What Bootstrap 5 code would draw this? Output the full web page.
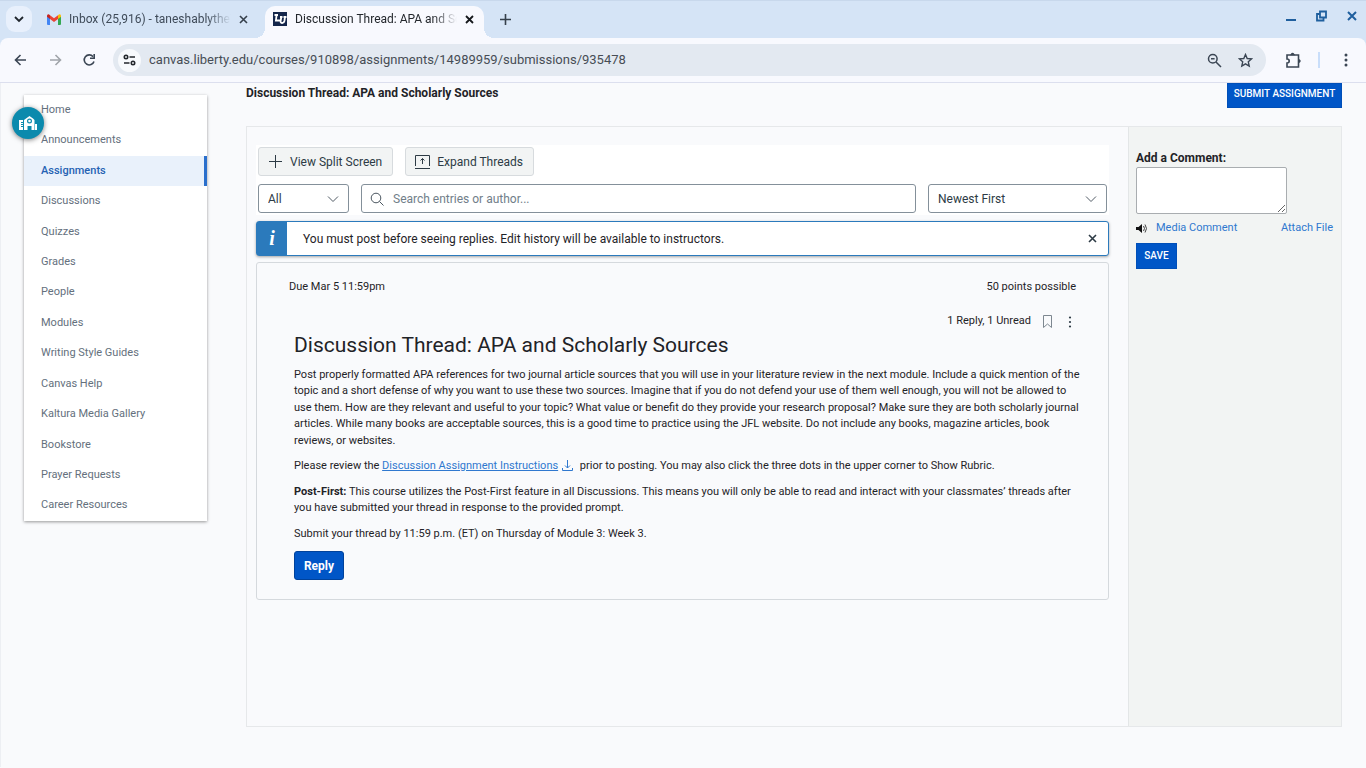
<!DOCTYPE html>
<html lang="en">
<head>
<meta charset="utf-8">
<meta name="viewport" content="width=device-width, initial-scale=1">
<title>Discussion Thread: APA and Scholarly Sources</title>
<link href="https://cdn.jsdelivr.net/npm/bootstrap@5.3.0/dist/css/bootstrap.min.css" rel="stylesheet">
<style>
  body { font-family: Roboto, "Liberation Sans", sans-serif; font-size: 11px; line-height: 1.5; color: #1f2327; background: #f9fafc; }
  button, input, select, textarea { font-family: inherit; }
  a { color: #2f78cf; }
  svg { display: block; flex: none; }
  .icon-btn { border: 0; background: none; padding: 0; color: inherit; display: flex; align-items: center; justify-content: center; flex: none; }

  .tab-strip { background: #d5e4f6; height: 38px; border-top: 1px solid #c8d8ec; }
  .tab-search { width: 26px; height: 26px; border-radius: 9px; background: #e8f0fc; margin: 5px 0 0 6px; }
  .browser-tab { height: 32px; margin-top: 5px; padding-bottom: 6px; font-size: 12px; }
  .tab-first { width: 216px; padding-left: 15px; color: #3f4b59; }
  .tab-current { position: relative; width: 219px; padding-left: 8px; padding-right: 10px; margin-left: 17px; background: #f8f9fe; border-radius: 10px 10px 0 0; color: #23272c; }
  .tab-current::before, .tab-current::after { content: ""; position: absolute; bottom: 0; width: 10px; height: 10px; }
  .tab-current::before { left: -10px; background: radial-gradient(circle at 0 0, transparent 10px, #f8f9fe 10px); }
  .tab-current::after { right: -10px; background: radial-gradient(circle at 100% 0, transparent 10px, #f8f9fe 10px); }
  .tab-title { white-space: nowrap; overflow: hidden; flex: 1; min-width: 0; -webkit-mask-image: linear-gradient(90deg, #000 85%, transparent); mask-image: linear-gradient(90deg, #000 85%, transparent); }
  .window-buttons { gap: 17px; padding-right: 8px; color: #1f5f9e; height: 30px; }

  .toolbar-wrap { background: #d5e4f6; }
  .toolbar { background: #f8f9fe; height: 45px; border-bottom: 1px solid #dcdfee; border-radius: 8px 8px 0 0; padding: 0 18px 0 12px; color: #3b4654; }
  .address { background: #e3e9f1; height: 32px; border-radius: 16px; padding: 0 13px 0 5px; margin: 0 19px 0 16px; }
  .site-info { width: 23px; height: 23px; border-radius: 50%; background: #f8fafd; color: #23272c; }
  .address input { border: 0; background: none; padding: 0; font-size: 13px; color: #474d55; outline: 0; }

  .page-body { padding: 0 24px 40px; gap: 39px; border-left: 1px solid #edeff3; }
  .side-column { width: 183px; margin-left: -1px; padding-top: 12px; position: relative; }
  .course-nav { min-height: 426px; background: #fff; box-shadow: 0 1px 3px rgba(0,0,0,.4); }
  .course-nav a { flex: 1; padding: 0 17px; color: #64707d; text-decoration: none; display: flex; align-items: center; }
  .course-nav a.current { background: #e9f1fb; color: #2562b3; font-weight: 500; border-right: 3px solid #2a6fcc; }
  .campus-badge { position: absolute; left: -12px; top: 24px; width: 32px; height: 32px; border-radius: 50%; background: #0b8aad; color: #fff; box-shadow: 0 1px 5px rgba(0,0,0,.5); }

  .page-title { font-size: 12px; font-weight: 700; line-height: 20px; margin: 0; }
  .solid-btn { background: #0056c7; color: #fff; border: 1px solid #004fb8; font-weight: 500; font-size: 10px; line-height: 16px; padding: 0; border-radius: 0; }
  .submit-btn { width: 115px; height: 25px; padding-bottom: 3px; }
  .save-btn { width: 41px; height: 26px; margin-top: 6px; }
  .work-area { min-height: 601px; margin-top: 18px; border: 1px solid #e6e8ea; }
  .thread-pane { padding: 18px 19px 20px 9px; }
  .comment-pane { width: 213px; background: #f2f4f3; border-left: 1px solid #e3e6e7; padding: 22px 8px 0 7px; }

  .filter-area { background: #fff; padding: 2px; }
  .filter-row { gap: 12px; }
  .soft-btn { height: 29px; border: 1px solid #d7dbde; border-radius: 3px; background: #f2f4f4; font-size: 12px; color: #2d3b45; padding: 0 10px 0 9px; gap: 7px; display: flex; align-items: center; }
  .field-box { height: 29px; border: 1px solid #84909a; border-radius: 3px; background: #fff; font-size: 12px; }
  select.field-box { padding: 0 9px; color: #2d3b45; appearance: none; background: #fff url("data:image/svg+xml,%3Csvg xmlns='http://www.w3.org/2000/svg' width='12' height='8' fill='none' stroke='%23505b64'%3E%3Cpath d='M1 1.5l5 5 5-5'/%3E%3C/svg%3E") no-repeat right 9px center; }
  .filter-kind { width: 91px; }
  .filter-sort { width: 179px; }
  .field-box input { border: 0; outline: 0; background: none; padding: 0; color: #2d3b45; }
  .field-box input::placeholder { color: #717e89; opacity: 1; }
  .notice { margin-top: 6px; height: 35px; border: 1px solid #2b7abc; border-radius: 3px; background: #fff; font-size: 12px; box-shadow: 0 1px 3px rgba(0,0,0,.35); }
  .notice-mark { width: 30px; background: #2b7abc; color: #fff; font: italic 700 20px "Liberation Serif", serif; }
  .thread-card { margin-top: 6px; min-height: 338px; border: 1px solid #d5d9dd; border-radius: 3px; padding: 16px 24px 18px 32px; }
  .entry { padding-left: 5px; }
  .entry-status { height: 20px; margin-top: 16px; gap: 12px; }
  .entry h2 { font-size: 21px; font-weight: 400; line-height: 26px; margin: 0 0 9px; }
  .entry p { margin: 0 0 9px; }
  .reply-btn { width: 50px; height: 29px; border-radius: 3px; font-size: 12px; font-weight: 700; border-color: #00429b; }
  .comment-label { display: block; height: 18px; font-size: 12px; font-weight: 700; }
  .comment-box { display: block; width: 151px; height: 47px; border: 1px solid #a9adb0; border-radius: 2px; background: #fff; }
  .comment-links { margin-top: 6px; }
  .comment-pane a { text-decoration: none; }
</style>
</head>
<body>
<header>
  <div class="tab-strip d-flex">
    <button class="icon-btn tab-search" aria-label="Search tabs"><svg width="10" height="8" fill="none" stroke="#20262d" stroke-width="1.800"><path d="M1 2l4 4 4-4"/></svg></button>
    <div class="browser-tab tab-first d-flex align-items-center">
      <svg width="14" height="11" viewBox="0 0 14 11" class="me-2"><path d="M0 2v8q0 1 1 1h2V4z" fill="#4285f4"/><path d="M14 2v8q0 1-1 1h-2V4z" fill="#34a853"/><path d="M11 1.200V5l3-2.200V1.500Q13-.8 11 1.200z" fill="#fbbc04"/><path d="M0 1.500V2.800L3 5V1.200Q1-.8 0 1.500z" fill="#c5221f"/><path d="M3 1.200V5l4 3 4-3V1.200L7 4.200z" fill="#ea4335"/></svg>
      <span class="tab-title">Inbox (25,916) - taneshablythe7</span>
      <button class="icon-btn ms-2" aria-label="Close tab"><svg width="9" height="9" stroke="#36404b" stroke-width="1.600"><path d="M1 1l7 7M8 1L1 8"/></svg></button>
    </div>
    <div class="browser-tab tab-current d-flex align-items-center">
      <svg width="14" height="14" viewBox="0 0 14 14" class="me-2"><path fill="#14264b" d="M0 0h14v14H0z"/><path fill="none" stroke="#fff" stroke-width="1.800" d="M1.500 3h3.500M3.600 3L2.900 8.500h4M7 5h2.500M8.300 5l-.7 4q-.2 2 1.600 2t2.200-2l.6-4M10.500 5h3"/></svg>
      <span class="tab-title">Discussion Thread: APA and Scholarly</span>
      <button class="icon-btn ms-2" aria-label="Close tab"><svg width="9" height="9" stroke="#16191c" stroke-width="1.800"><path d="M1 1l7 7M8 1L1 8"/></svg></button>
    </div>
    <button class="icon-btn ms-3" aria-label="New tab"><svg width="11" height="11" stroke="#36404b" stroke-width="1.600"><path d="M5.500 0v11M0 5.500h11"/></svg></button>
    <div class="window-buttons d-flex align-items-center ms-auto">
      <button class="icon-btn" aria-label="Minimize"><svg width="14" height="14" stroke="currentColor" stroke-width="2"><path d="M2 11h10"/></svg></button>
      <button class="icon-btn" aria-label="Restore"><svg width="14" height="12" fill="none" stroke="currentColor" stroke-width="1.800"><path d="M5 1.500h6v6H5zM5 4H2v6.500h6.500V8"/></svg></button>
      <button class="icon-btn" aria-label="Close"><svg width="12" height="12" stroke="currentColor" stroke-width="2"><path d="M2 2l8 8M10 2l-8 8"/></svg></button>
    </div>
  </div>
  <div class="toolbar-wrap">
    <div class="toolbar d-flex align-items-center">
      <button class="icon-btn" aria-label="Back"><svg width="17" height="14" fill="none" stroke="currentColor" stroke-width="1.600"><path d="M14 7H4M8.500 2l-5 5 5 5"/></svg></button>
      <button class="icon-btn ms-3" aria-label="Forward"><svg width="20" height="14" fill="none" stroke="#a0a4aa" stroke-width="1.600"><path d="M5 7h10M10.500 2l5 5-5 5"/></svg></button>
      <button class="icon-btn ms-3" aria-label="Reload"><svg width="16" height="14" fill="none" stroke="currentColor" stroke-width="1.600"><path d="M13 8.500A5 5 0 1 1 12 3.600"/><path d="M13.200 1v4.200H9"/></svg></button>
      <div class="address d-flex align-items-center flex-fill">
        <button class="icon-btn site-info" aria-label="Site information"><svg width="13" height="12" fill="none" stroke="currentColor" stroke-width="1.600"><circle cx="3" cy="3" r="1.700"/><path d="M6.500 3H12M1 9h5.500"/><circle cx="10" cy="9" r="1.700"/></svg></button>
        <input class="flex-fill ms-2" aria-label="Address" value="canvas.liberty.edu/courses/910898/assignments/14989959/submissions/935478">
        <button class="icon-btn" aria-label="Zoom"><svg width="15" height="15" fill="none" stroke="currentColor" stroke-width="1.500"><circle cx="5.800" cy="5.800" r="4.300"/><path d="M9 9l5 5M4 5.800h3.600"/></svg></button>
        <button class="icon-btn ms-3" aria-label="Bookmark this page"><svg width="15" height="15" viewBox="0 0 15 15" fill="none" stroke="currentColor" stroke-width="1.400"><path d="M7.500 1.500l1.700 4 4.300.4-3.200 2.900.9 4.300-3.700-2.300-3.700 2.300.9-4.300L1.500 5.900l4.300-.4z"/></svg></button>
      </div>
      <button class="icon-btn" aria-label="Extensions"><svg width="17" height="17" fill="none" stroke="currentColor" stroke-width="1.600"><path d="M2 3h11.500v12H2v-4q2.200 0 2.200-2T2 7z"/><path fill="currentColor" d="M6.500 2.500q1-1.800 2.200 0zM14 8q1.800 1 0 2.200z"/></svg></button>
      <svg width="2" height="16" class="ms-3"><path fill="#c9defa" d="M0 0h2v16H0z"/></svg>
      <button class="icon-btn ms-4" aria-label="Menu"><svg width="4" height="14" fill="currentColor"><circle cx="2" cy="2" r="1.500"/><circle cx="2" cy="7" r="1.500"/><circle cx="2" cy="12" r="1.500"/></svg></button>
    </div>
  </div>
</header>

<div class="page-body d-flex">
  <div class="side-column flex-shrink-0">
    <nav class="course-nav d-flex flex-column" aria-label="Course">
      <a href="#">Home</a><a href="#">Announcements</a><a href="#" class="current">Assignments</a><a href="#">Discussions</a><a href="#">Quizzes</a><a href="#">Grades</a><a href="#">People</a><a href="#">Modules</a><a href="#">Writing Style Guides</a><a href="#">Canvas Help</a><a href="#">Kaltura Media Gallery</a><a href="#">Bookstore</a><a href="#">Prayer Requests</a><a href="#">Career Resources</a>
    </nav>
    <button class="icon-btn campus-badge" aria-label="Campus"><svg width="18" height="16" viewBox="0 0 18 16" fill="currentColor"><path fill-rule="evenodd" d="M0 5h4v2H2v1h2v1H2v1h2v1H2v1h2v3H0zM5 15V5l2-1.500L10.500 1 14 3.500 15.500 5v10h-3v-4h-4v4zM10.500 3.500a2.500 2.500 0 1 0 0 5 2.500 2.500 0 1 0 0-5zM16 9h2v6h-2z"/><circle cx="10.500" cy="6" r="1.300"/></svg></button>
  </div>

  <main class="flex-fill">
    <div class="d-flex justify-content-between align-items-start">
      <h1 class="page-title">Discussion Thread: APA and Scholarly Sources</h1>
      <button class="solid-btn submit-btn">SUBMIT ASSIGNMENT</button>
    </div>
    <div class="work-area d-flex">
      <section class="thread-pane flex-fill">
        <div class="filter-area">
          <div class="filter-row d-flex">
            <button class="soft-btn"><svg width="15" height="13" stroke="currentColor"><path d="M7.500 0v13M1 6.500h13"/></svg>View Split Screen</button>
            <button class="soft-btn"><svg width="15" height="14" fill="none" stroke="currentColor"><path d="M.5 11V.5h14V11M0 13.500h15M7.500 9V3.500M5.500 5.500l2-2 2 2"/></svg>Expand Threads</button>
          </div>
          <div class="filter-row d-flex mt-2">
            <select class="field-box filter-kind" aria-label="Filter"><option>All</option></select>
            <div class="field-box d-flex align-items-center flex-fill px-2">
              <svg width="15" height="14" fill="none" stroke="#4b5660"><circle cx="6" cy="6" r="4.800"/><path d="M9.500 9.500l4 4"/></svg>
              <input class="flex-fill ms-2" type="text" aria-label="Search" placeholder="Search entries or author...">
            </div>
            <select class="field-box filter-sort" aria-label="Sort order"><option>Newest First</option></select>
          </div>
        </div>
        <div class="notice d-flex align-items-stretch" role="status">
          <span class="notice-mark d-flex align-items-center justify-content-center">i</span>
          <span class="align-self-center ms-3">You must post before seeing replies. Edit history will be available to instructors.</span>
          <button class="icon-btn ms-auto me-2" aria-label="Dismiss"><svg width="15" height="9" stroke="#2d3b45" stroke-width="1.600"><path d="M4 1l7 7M11 1L4 8"/></svg></button>
        </div>
        <article class="thread-card">
          <div class="d-flex justify-content-between pe-2"><span>Due Mar 5 11:59pm</span><span>50 points possible</span></div>
          <div class="entry">
            <div class="entry-status d-flex align-items-center justify-content-end pe-2">
              <span>1 Reply, 1 Unread</span>
              <button class="icon-btn" aria-label="Mark"><svg width="9" height="13" fill="none" stroke="#7d8790"><path d="M.5.500h8v12l-4-3.500-4 3.500z"/></svg></button>
              <button class="icon-btn" aria-label="Options"><svg width="12" height="12" fill="#2d3b45"><circle cx="6" cy="1.500" r="1.100"/><circle cx="6" cy="6" r="1.100"/><circle cx="6" cy="10.500" r="1.100"/></svg></button>
            </div>
            <h2>Discussion Thread: APA and Scholarly Sources</h2>
            <p>Post properly formatted APA references for two journal article sources that you will use in your literature review in the next module. Include a quick mention of the topic and a short defense of why you want to use these two sources. Imagine that if you do not defend your use of them well enough, you will not be allowed to use them. How are they relevant and useful to your topic? What value or benefit do they provide your research proposal? Make sure they are both scholarly journal articles. While many books are acceptable sources, this is a good time to practice using the JFL website. Do not include any books, magazine articles, book reviews, or websites.</p>
            <p>Please review the <a href="#">Discussion Assignment Instructions</a><a href="#" aria-label="Download"><svg class="d-inline-block mx-1 align-text-bottom" width="11" height="13" fill="none" stroke="currentColor"><path d="M5.500 1v8M3 6.500L5.500 9 8 6.500M.5 9v2.500h10V9"/></svg></a> prior to posting. You may also click the three dots in the upper corner to Show Rubric.</p>
            <p><strong>Post-First:</strong> This course utilizes the Post-First feature in all Discussions. This means you will only be able to read and interact with your classmates’ threads after you have submitted your thread in response to the provided prompt.</p>
            <p>Submit your thread by 11:59 p.m. (ET) on Thursday of Module 3: Week 3.</p>
            <button class="solid-btn reply-btn">Reply</button>
          </div>
        </article>
      </section>
      <aside class="comment-pane flex-shrink-0">
        <label class="comment-label" for="comment">Add a Comment:</label>
        <textarea class="comment-box" id="comment"></textarea>
        <div class="comment-links d-flex justify-content-between">
          <a href="#" class="d-flex align-items-center"><svg width="12" height="11" class="me-2" fill="#111"><path d="M0 4h2.500L6 1v9L2.500 7H0z"/><path fill="none" stroke="#444" d="M7.500 3q2 2.500 0 5M9 1.500q3 4 0 8"/></svg>Media Comment</a>
          <a href="#">Attach File</a>
        </div>
        <button class="solid-btn save-btn">SAVE</button>
      </aside>
    </div>
  </main>
</div>
<script src="https://cdn.jsdelivr.net/npm/bootstrap@5.3.0/dist/js/bootstrap.bundle.min.js"></script>
</body>
</html>
